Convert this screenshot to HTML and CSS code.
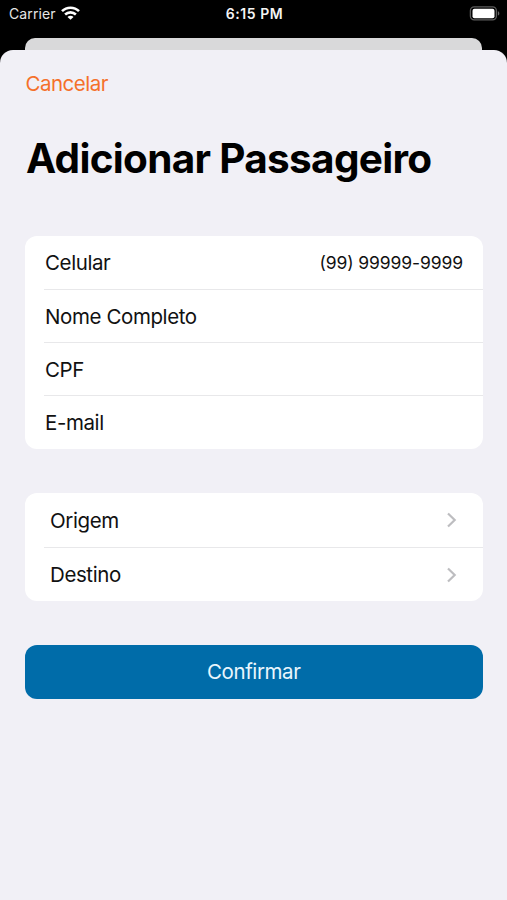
FILE: index.html
```html
<!DOCTYPE html>
<html lang="pt-BR">
<head>
    <meta charset="UTF-8">
    <meta name="viewport" content="width=device-width, initial-scale=1.0">
    <title>Adicionar Passageiro</title>
    <link rel="stylesheet" href="styles.css">
</head>
<body>
    <!-- Status bar -->
    <div class="status-bar">
        <div class="carrier">
            <span>Carrier</span>
            <svg class="wifi" width="19" height="14" viewBox="0 0 19 14" fill="none" stroke="#fff" stroke-width="2.6">
                <path d="M1 5.2C5.7 0.5 13.3 0.5 18 5.2"/>
                <path d="M4.1 8.5C7.2 5.6 11.8 5.6 14.9 8.5"/>
                <path d="M9.5 13.8L6.5 10.9C8.1 9.4 10.9 9.4 12.5 10.9Z" fill="#fff" stroke="none"/>
            </svg>
        </div>
        <span class="time">6:15 PM</span>
        <div class="battery">
            <svg width="31" height="15" viewBox="0 0 31 15">
                <rect x="1.4" y="0.9" width="26" height="13" rx="3.8" fill="none" stroke="#5c5c5c" stroke-width="1.3"/>
                <rect x="3.5" y="2.8" width="22" height="9.4" rx="2" fill="#fff"/>
                <path d="M28.9 5.2C30.8 5.9 30.8 8.9 28.9 9.6Z" fill="#666"/>
            </svg>
        </div>
    </div>

    <div class="sheet-behind"></div>

    <div class="sheet">
        <a href="#" class="cancel">Cancelar</a>
        <h1>Adicionar Passageiro</h1>

        <!-- Passenger data -->
        <div class="group">
            <div class="row">
                <span>Celular</span>
                <span class="value">(99) 99999-9999</span>
            </div>
            <div class="row"><span>Nome Completo</span></div>
            <div class="row"><span>CPF</span></div>
            <div class="row"><span>E-mail</span></div>
        </div>

        <!-- Route -->
        <div class="group route">
            <div class="row">
                <span>Origem</span>
                <svg class="chevron" width="10" height="16" viewBox="0 0 10 16"><path d="M1 1.5L7.7 8L1 14.5"/></svg>
            </div>
            <div class="row">
                <span>Destino</span>
                <svg class="chevron" width="10" height="16" viewBox="0 0 10 16"><path d="M1 1.5L7.7 8L1 14.5"/></svg>
            </div>
        </div>

        <button type="button" class="btn-confirm">Confirmar</button>
    </div>
</body>
</html>
```
FILE: styles.css
```css
* {
    box-sizing: border-box;
}
body {
    margin: 0;
    height: 900px;
    display: flex;
    flex-direction: column;
    overflow: hidden;
    background-color: #000;
    color: #111;
    font-family: Inter, "Liberation Sans", sans-serif;
    font-size: 20.5px;
    letter-spacing: -0.4px;
}
.status-bar {
    display: grid;
    grid-template-columns: 1fr auto 1fr;
    height: 38px;
    padding: 5px 7px 0 9px;
    align-items: start;
    color: #e6e6e6;
    font-size: 14px;
    line-height: 18px;
    letter-spacing: 0.1px;
}
.carrier {
    display: flex;
    gap: 5px;
}
.wifi {
    margin-top: 1px;
}
.time {
    color: #f4f4f4;
    font-weight: 600;
    letter-spacing: 0.55px;
}
.battery {
    display: flex;
    justify-content: flex-end;
    padding-top: 1px;
}
.sheet-behind {
    height: 12px;
    margin: 0 25px;
    border-radius: 10px 10px 0 0;
    background-color: #d9d9da;
}
.sheet {
    flex: 1;
    padding: 22px 24.5px 0 25px;
    border-radius: 13px 13px 0 0;
    background-color: #f1f0f6;
}
.cancel {
    display: block;
    padding-left: 0.5px;
    line-height: 24px;
    color: #f5702a;
    letter-spacing: -0.5px;
    text-decoration: none;
}
h1 {
    margin: 38px 0 52px 1px;
    color: #000;
    font-size: 40.5px;
    font-weight: 700;
    line-height: 49px;
    padding-bottom: 1px;
    letter-spacing: -0.7px;
}
.group {
    margin-bottom: 44px;
    padding-left: 19px;
    border-radius: 12px;
    background-color: #fff;
}
.row {
    display: flex;
    justify-content: space-between;
    align-items: center;
    height: 53px;
    padding: 0 19.5px 0 1px;
}
.row:last-child {
    height: 54px;
}
.row + .row {
    border-top: 1px solid #e8e8ea;
}
.value {
    font-size: 17.5px;
    letter-spacing: -0.1px;
}
.route .row {
    height: 54px;
    padding: 0 25.5px 0 6px;
}
.chevron {
    fill: none;
    stroke: #bdbdc0;
    stroke-width: 2.2;
}
.btn-confirm {
    display: block;
    width: 100%;
    height: 53.5px;
    border: none;
    border-radius: 12px;
    background-color: #006ca9;
    color: #e9f6fd;
    font-family: inherit;
    font-size: 20.5px;
    letter-spacing: -0.4px;
}
```
